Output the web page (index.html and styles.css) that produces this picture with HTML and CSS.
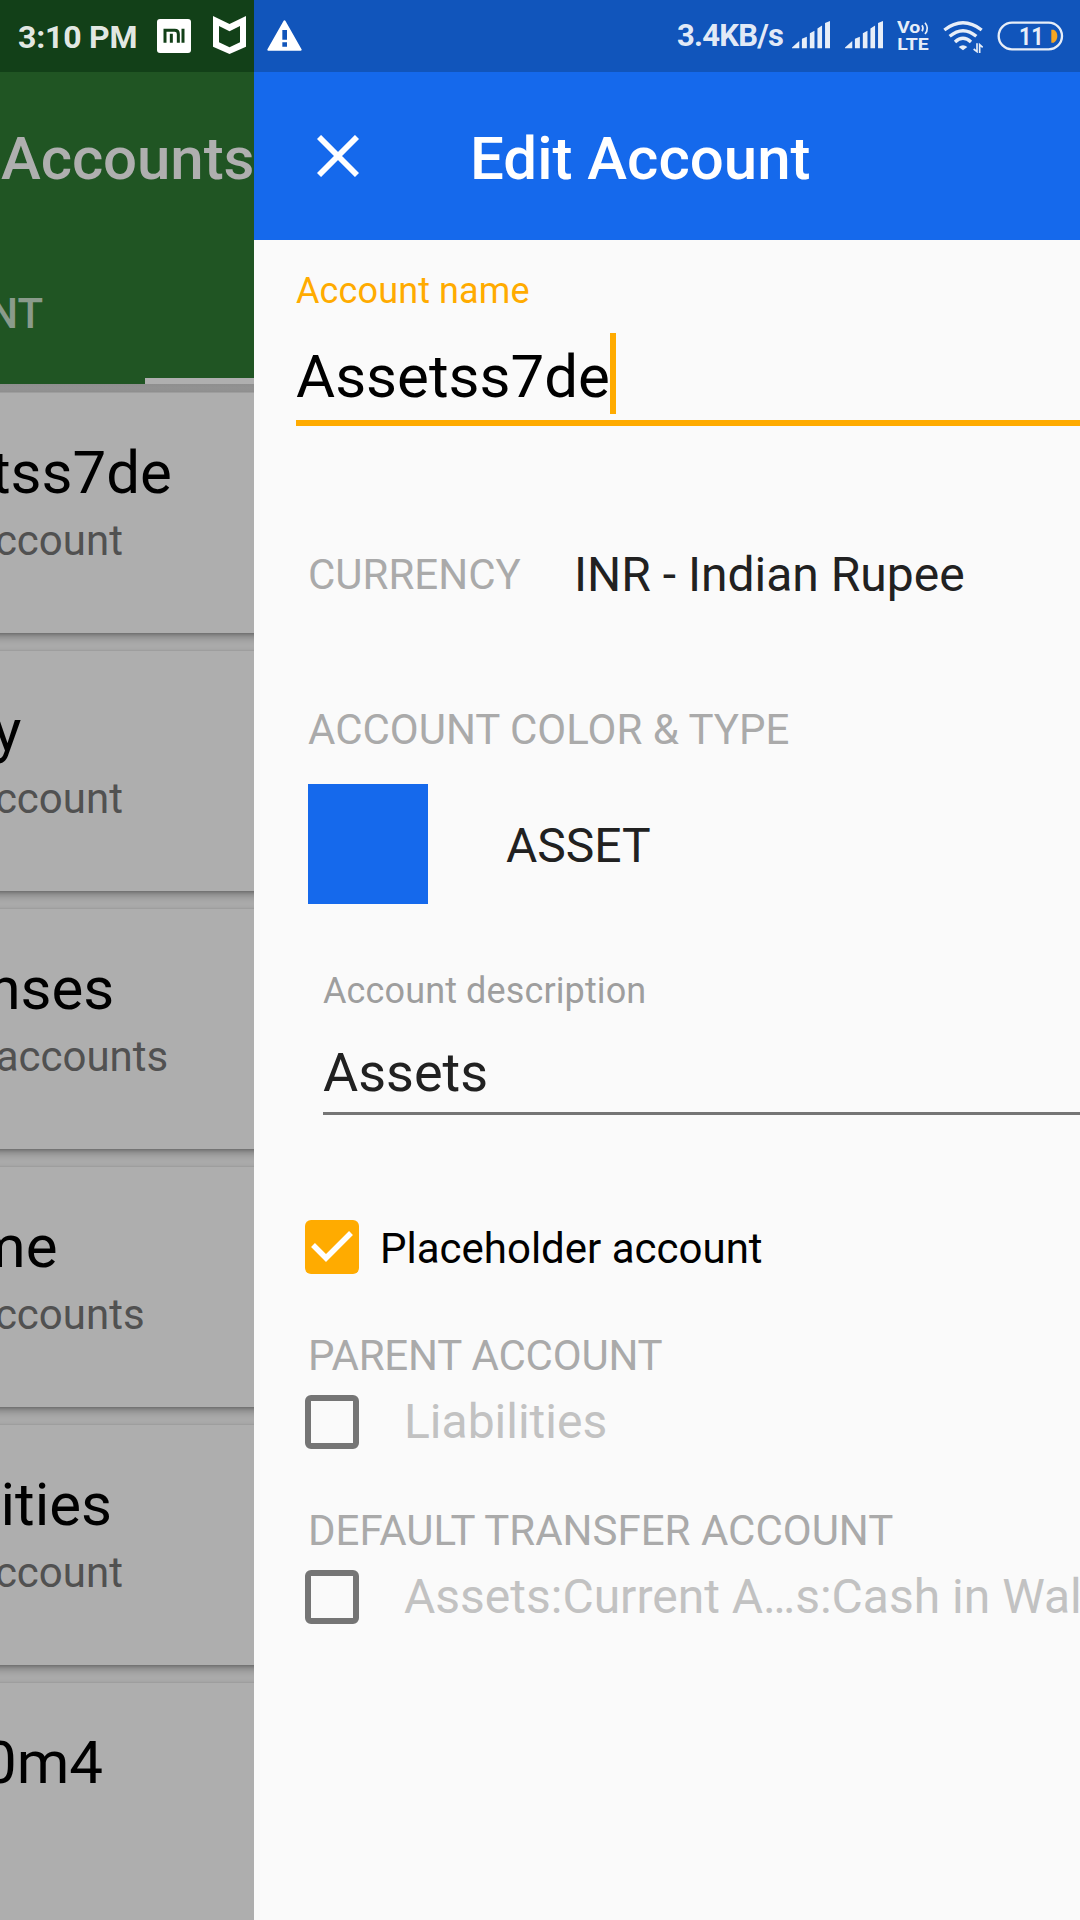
FILE: index.html
```html
<!DOCTYPE html>
<html lang="en">
<head>
<meta charset="utf-8">
<title>Edit Account</title>
<link rel="stylesheet" href="styles.css">
</head>
<body>
<header class="status">
  <div class="status-left">
    <span class="status-text clock">3:10 PM</span>
    <svg class="ic-mi" width="34" height="34" viewBox="0 0 102 102"><rect width="102" height="102" rx="9" fill="#fff"/><path d="M24 71V34H53Q64 34 64 45V71M43 44V71M78 29V71" fill="none" stroke="#124018" stroke-width="9"/></svg>
    <svg class="ic-shield" width="33" height="38" viewBox="0 0 99 114"><path fill="#fff" fill-rule="evenodd" d="M0 0L49.500 24L99 0V92L49.500 114L0 92ZM18 30V79L49.500 94L81 79V30L49.500 46Z"/></svg>
    <svg class="ic-warn" width="35" height="31" viewBox="0 0 105 93"><path d="M52.500 4L101 89H4Z" fill="#fff" stroke="#fff" stroke-width="6" stroke-linejoin="round"/><path d="M46 30h14v29H46zM46 67h14v13H46z" fill="#1155bb"/></svg>
  </div>
  <div class="status-right">
    <span class="status-text speed">3.4KB/s</span>
    <svg class="ic-sig1" width="38" height="28" viewBox="0 0 115 84"><path class="lit" d="M0 80L22 60V82H0ZM30 53L45 47V82H30ZM54 37L68 29V82H54ZM77 22L91 13V82H77ZM100 6L115 0V82H100Z"/></svg>
    <svg class="ic-sig2" width="38" height="28" viewBox="0 0 115 84"><path class="lit" d="M0 80L22 60V82H0ZM30 53L45 47V82H30ZM54 37L68 29V82H54ZM77 22L91 13V82H77ZM100 6L115 0V82H100Z"/></svg>
    <svg class="ic-volte" width="34" height="32" viewBox="0 0 102 96"><text class="lit volte" x="0" y="36" font-size="48" textLength="70" lengthAdjust="spacingAndGlyphs">Vo</text><path class="line" stroke-width="5" d="M75 13Q81 22 75 31M84 5Q98 22 84 39"/><text class="lit volte" x="1" y="87" font-size="52" textLength="94" lengthAdjust="spacingAndGlyphs">LTE</text></svg>
    <svg class="ic-wifi" width="40" height="32" viewBox="0 0 120 96"><g class="line" stroke-width="10"><path d="M4 27Q60 -16 116 27M20 46Q60 12 100 46M36 63Q60 41 84 63"/></g><path class="lit" d="M47 78Q60 67 73 78L60 88Z"/><path class="line" stroke-width="5" d="M102 67V92L92 84M110 96V71L119 79"/></svg>
    <svg class="ic-batt" width="67" height="30" viewBox="0 0 201 90"><rect class="line" stroke-width="7" x="5" y="5" width="190" height="80" rx="40"/><text class="lit batt" x="66" y="73" font-size="77" textLength="74" lengthAdjust="spacingAndGlyphs">11</text><path d="M163 26H170Q181 31 181 45T170 65H163Z" fill="#f5a623"/></svg>
  </div>
</header>
<div class="screens">
  <aside class="back">
    <div class="back-bar">
      <div class="back-title">Accounts</div>
      <div class="back-tabs"><span class="tab">RECENT</span></div>
      <div class="indicator"></div>
    </div>
    <div class="list">
      <div class="card"><div class="name">Assetss7de</div><div class="sub">1 sub-account</div></div>
      <div class="card"><div class="name">Equity</div><div class="sub">1 sub-account</div></div>
      <div class="card"><div class="name">Expenses</div><div class="sub">14 sub-accounts</div></div>
      <div class="card"><div class="name">Income</div><div class="sub">4 sub-accounts</div></div>
      <div class="card"><div class="name">Liabilities</div><div class="sub">1 sub-account</div></div>
      <div class="card"><div class="name name-end">0m4</div></div>
    </div>
  </aside>
  <main class="edit">
    <div class="bar">
      <svg class="close" width="42" height="42" viewBox="0 0 42 42"><path d="M2 2L40 40M40 2L2 40" stroke="#fff" stroke-width="5.800"/></svg>
      <h1 class="title">Edit Account</h1>
    </div>
    <form class="form">
      <div class="field field-name">
        <div class="label label-on">Account name</div>
        <div class="value-name"><span>Assetss7de</span><i class="caret"></i></div>
      </div>
      <div class="currency"><span class="section">CURRENCY</span><span class="value">INR - Indian Rupee</span></div>
      <div class="section section-color">ACCOUNT COLOR &amp; TYPE</div>
      <div class="type"><span class="swatch"></span><span class="value">ASSET</span></div>
      <div class="field field-desc">
        <div class="label">Account description</div>
        <div class="value-desc">Assets</div>
      </div>
      <div class="check check-holder"><span class="box box-on"><svg width="54" height="54" viewBox="0 0 54 54"><path d="M8 25L21 38L46 13" fill="none" stroke="#fff" stroke-width="5.500"/></svg></span><span class="check-text">Placeholder account</span></div>
      <div class="section section-parent">PARENT ACCOUNT</div>
      <div class="check check-off"><span class="box"></span><span class="value disabled">Liabilities</span></div>
      <div class="section">DEFAULT TRANSFER ACCOUNT</div>
      <div class="check check-off"><span class="box"></span><span class="value disabled">Assets:Current A…s:Cash in Wallet</span></div>
    </form>
  </main>
</div>
</body>
</html>
```

FILE: styles.css
```css
* { box-sizing: border-box; }
body {
  margin: 0;
  width: 1080px;
  height: 1920px;
  overflow: hidden;
  display: flex;
  flex-direction: column;
  font-family: Roboto, "Liberation Sans", sans-serif;
  background: #fafafa;
}

/* status bar */
.status {
  height: 72px;
  flex: none;
  display: flex;
  justify-content: space-between;
  background: linear-gradient(90deg, #124018 254px, #1155bb 254px);
}
.status-left, .status-right { display: flex; align-items: flex-start; }
.status-left { padding-left: 18px; }
.status-text {
  font-size: 32px;
  line-height: 38px;
  font-weight: 700;
  color: rgba(255, 255, 255, .9);
  white-space: nowrap;
}
.clock { width: 139px; letter-spacing: -.2px; }
.status-left .status-text { margin-top: 18px; }
.status-right .status-text { margin-top: 17px; width: 115px; }
.status-right .speed { font-size: 31px; letter-spacing: -.75px; }
.ic-mi { margin-top: 19px; }
.ic-shield { margin: 16px 0 0 22px; }
.ic-warn { margin: 20px 0 0 21px; }
.status-right { padding-right: 16px; }
.ic-sig1 { margin-top: 21px; }
.ic-sig2 { margin: 21px 0 0 15px; }
.ic-volte { margin: 21px 0 0 14px; }
.ic-wifi { margin: 21px 0 0 12px; }
.ic-batt { margin: 21px 0 0 14px; }
.lit { fill: #e7eef8; }
.line { fill: none; stroke: #e7eef8; }
.volte, .batt { font-weight: 700; }

.screens { flex: 1; display: flex; min-height: 0; }

/* dimmed account list */
.back {
  width: 254px;
  flex: none;
  overflow: hidden;
  display: flex;
  flex-direction: column;
  background: #ababab;
  white-space: nowrap;
}
.back-bar {
  height: 312px;
  flex: none;
  display: flex;
  flex-direction: column;
  background: #205523;
}
.back-title {
  padding: 51px 0 0 1px;
  font-size: 60px;
  line-height: 71px;
  font-weight: 500;
  letter-spacing: -.1px;
  color: #afafaf;
}
.back-tabs {
  width: 43px;
  margin-top: 95px;
  display: flex;
  justify-content: flex-end;
  font-size: 42px;
  line-height: 49px;
  font-weight: 500;
  color: #8a9b8b;
}
.indicator { width: 109px; height: 6px; margin: auto 0 0 145px; background: #afafaf; }
.list {
  flex: 1;
  padding-top: 9px;
  display: flex;
  flex-direction: column;
  gap: 18px;
  background: linear-gradient(#8f8f8f, #969696 9px, #ababab 9px);
}
.card {
  height: 240px;
  flex: none;
  margin: 0 -20px;
  background: #aeaeae;
  box-shadow: 0 -1px 0 #9e9e9e, 0 4px 8px rgba(0, 0, 0, .28), 0 1px 3px rgba(0, 0, 0, .2);
}
.name { margin-left: -122px; padding-top: 44px; font-size: 60px; line-height: 71px; color: #000; }
.name-end { width: 245px; text-align: right; }
.sub { margin: 8px 0 0 -122px; font-size: 42px; line-height: 49px; color: #515151; }

/* edit screen */
.edit { flex: 1; min-width: 0; overflow: hidden; background: #fafafa; }
.bar {
  height: 168px;
  display: flex;
  align-items: flex-start;
  background: #1569ec;
}
.close { margin: 63px 0 0 63px; }
.title {
  margin: 51px 0 0 111px;
  font-size: 60px;
  line-height: 71px;
  font-weight: 500;
  color: #fff;
}
.form { display: flex; flex-direction: column; white-space: nowrap; }
.label { font-size: 36px; line-height: 42px; letter-spacing: .12px; color: #9e9e9e; }
.label-on { color: #ffab00; }
.field-name { margin: 30px 0 0 42px; border-bottom: 6px solid #ffab00; }
.value-name {
  height: 108px;
  padding-top: 21px;
  display: flex;
  align-items: flex-start;
  font-size: 60px;
  line-height: 71px;
  color: #000;
}
.value-name span { padding-top: 8px; width: 314px; }
.caret { width: 6px; height: 81px; background: #ffab00; }
.section { margin-left: 54px; font-size: 42px; line-height: 49px; color: #aaa; }
.value { font-size: 48px; line-height: 57px; color: #212121; }
.currency { display: flex; align-items: flex-start; margin-top: 120px; }
.currency .section { width: 266px; padding-top: 4px; }
.section-color { margin-top: 102px; }
.section-parent { letter-spacing: -.2px; }
.type { display: flex; align-items: center; margin: 30px 0 0 54px; }
.swatch { width: 120px; height: 120px; margin-right: 78px; background: #1569ec; }
.type .value { padding-top: 3px; }
.field-desc { margin: 66px 0 0 69px; border-bottom: 3px solid #757575; }
.value-desc { padding: 29px 0 8px; font-size: 54px; line-height: 63px; color: #212121; }
.check { display: flex; align-items: center; height: 54px; margin-left: 51px; }
.box { width: 54px; height: 54px; flex: none; border: 6px solid #757575; border-radius: 6px; }
.box-on { border: 0; background: #ffab00; }
.box-on svg { display: block; }
.check-holder { margin-top: 105px; margin-bottom: 57px; }
.check-text { margin-left: 21px; padding-top: 3px; font-size: 42px; line-height: 49px; color: #000; }
.check-off { margin-top: 15px; margin-bottom: 57px; }
.disabled { margin-left: 45px; padding-bottom: 1px; color: #c2c2c2; }
```
